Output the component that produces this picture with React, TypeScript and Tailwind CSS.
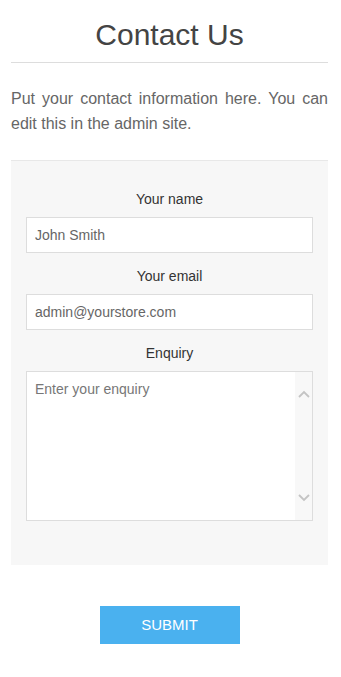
import React from "react";

export default function App() {
  return (
    <div className="w-[341px] min-h-[677px] bg-white pl-[11px] pr-[13px] pt-[17px] pb-[33px] font-['Liberation_Sans',Arial,sans-serif]">
      <h1 className="text-center text-[30px] leading-[36px] text-[#444] font-normal">Contact Us</h1>
      <div className="mt-[9px] h-px bg-[#dddddd]" />
      <p className="mt-[23px] text-[16px] leading-[25px] text-[#666] text-justify">
        Put your contact information here. You can edit this in the admin site.
      </p>
      <div className="mt-[24px] border-t border-[#e8e8e8] bg-[#f7f7f7] px-[15px] pt-[28px] pb-[44px]">
        <label className="block text-center text-[14px] leading-[20px] text-[#333]">Your name</label>
        <input
          className="mt-[8px] block w-full h-[36px] border border-[#dddddd] bg-white px-[8px] text-[14px] text-[#666] outline-none"
          defaultValue="John Smith"
        />
        <label className="mt-[13px] block text-center text-[14px] leading-[20px] text-[#333]">Your email</label>
        <input
          className="mt-[8px] block w-full h-[36px] border border-[#dddddd] bg-white px-[8px] text-[14px] text-[#666] outline-none"
          defaultValue="admin@yourstore.com"
        />
        <label className="mt-[13px] block text-center text-[14px] leading-[20px] text-[#333]">Enquiry</label>
        <div className="mt-[8px] flex h-[150px] border border-[#dddddd] bg-white">
          <textarea
            className="flex-1 resize-none bg-white px-[8px] pt-[7px] text-[14px] leading-[20px] text-[#666] placeholder:text-[#777] outline-none"
            placeholder="Enter your enquiry"
          />
          <div className="flex w-[17px] flex-col items-center justify-between bg-[#f8f8f8] pt-[18px] pb-[18px]">
            <svg width="12" height="8" viewBox="0 0 12 8" fill="none">
              <path d="M1 7 L6 2 L11 7" stroke="#c4c4c4" strokeWidth="1.8" />
            </svg>
            <svg width="12" height="8" viewBox="0 0 12 8" fill="none">
              <path d="M1 1 L6 6 L11 1" stroke="#c4c4c4" strokeWidth="1.8" />
            </svg>
          </div>
        </div>
      </div>
      <div className="mt-[41px] flex justify-center">
        <button className="h-[38px] w-[140px] bg-[#4ab1ef] text-[15px] text-white">SUBMIT</button>
      </div>
    </div>
  );
}
